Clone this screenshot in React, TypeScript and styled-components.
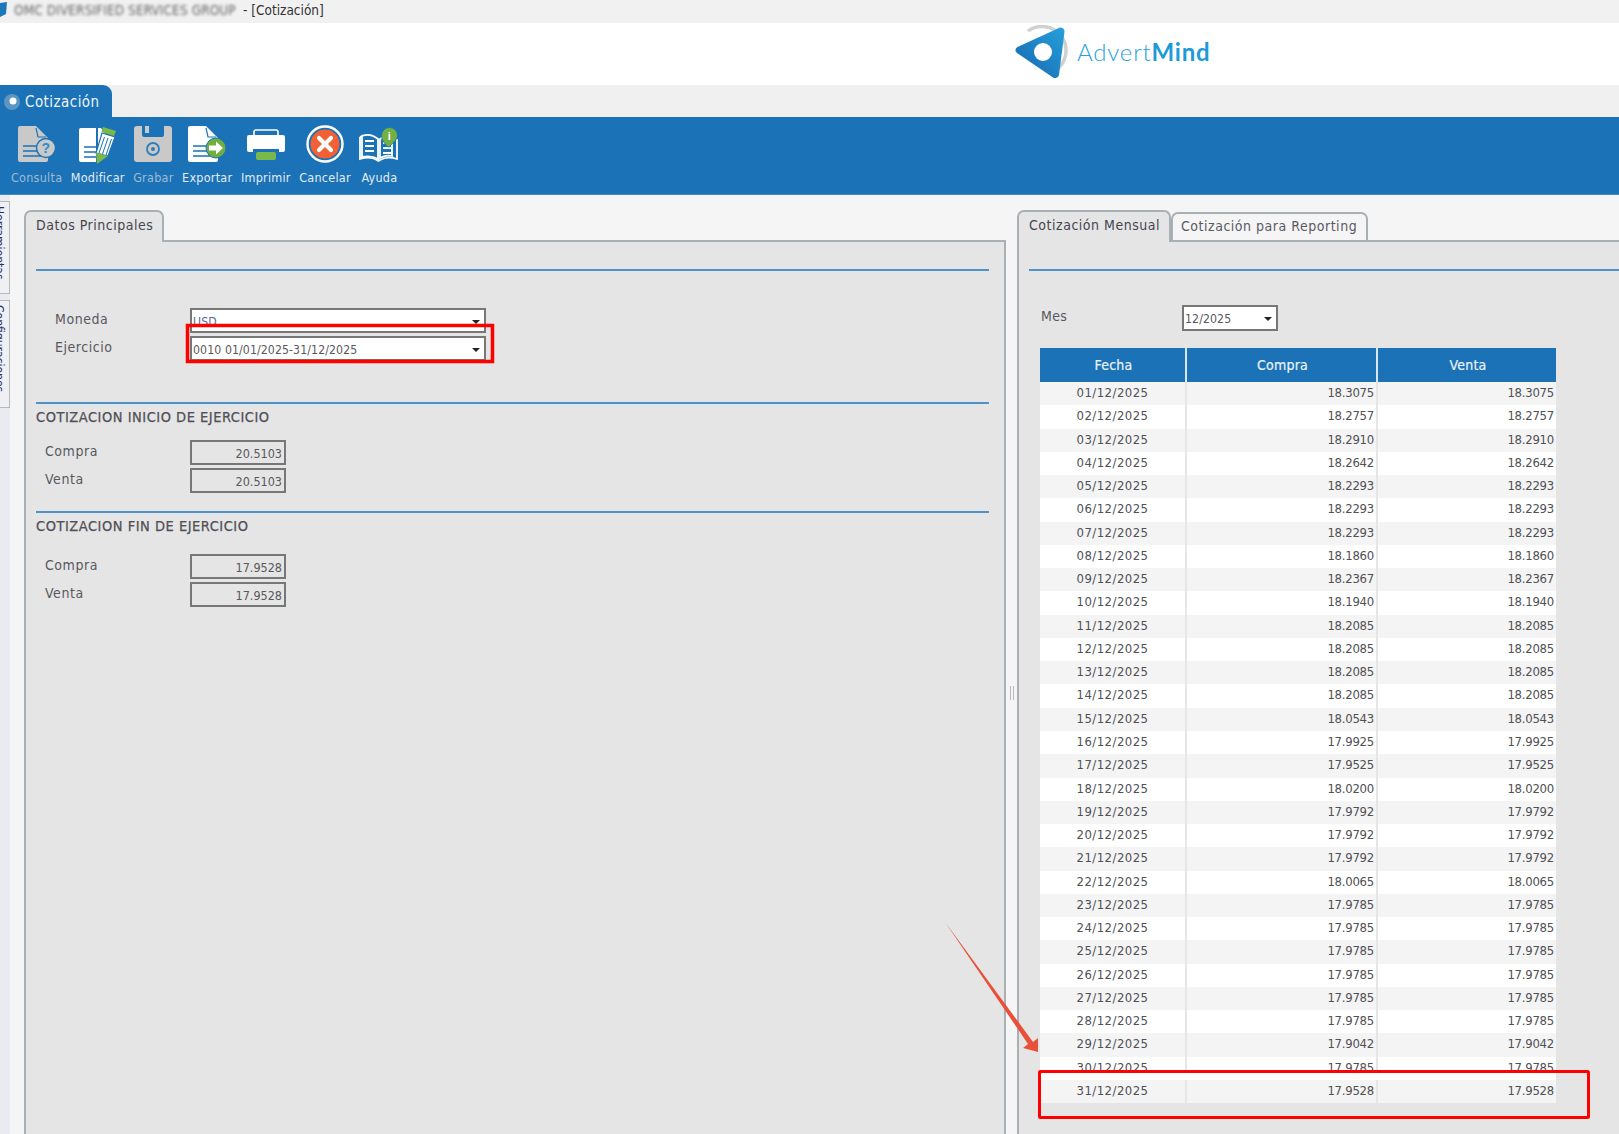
import React from "react";
import styled, { createGlobalStyle } from "styled-components";

const Global = createGlobalStyle`
  html, body { margin: 0; padding: 0; background: #f5f5f5; }
  * { box-sizing: border-box; }
  body { font-family: "DejaVu Sans Condensed", "DejaVu Sans", sans-serif; }
`;

const Page = styled.div`
  position: relative; width: 1619px; height: 1134px; overflow: hidden;
  display: flex; flex-direction: column; background: #f5f5f5;
`;
const TitleBar = styled.div`
  height: 23px; background: #f1f1f1; display: flex; align-items: center; gap: 4px; padding-bottom: 4px;
  font-size: 13.5px; color: #333; overflow: hidden; flex: none;
`;
const TitleMark = styled.svg`width: 8px; height: 18px; flex: none;`;
const BlurredName = styled.span`
  margin-left: 2px; width: 225px; white-space: nowrap; color: #666; filter: blur(1.4px); letter-spacing: .1px;
`;
const LogoBand = styled.div`
  height: 62px; background: #fff; display: flex; align-items: center; padding-left: 1012px; gap: 9px; flex: none;
`;
const LogoMark = styled.svg`width: 56px; height: 58px; flex: none;`;
const LogoText = styled.span`
  font-family: Lato, "Open Sans", sans-serif; font-size: 24px; font-weight: 300; color: #2ba2dc; letter-spacing: .8px; padding-bottom: 5px;
`;
const LogoBold = styled.b`font-weight: 700; color: #1e9bd7;`;
const TabStrip = styled.div`height: 32px; background: #f0f0f0; display: flex; flex: none;`;
const WindowTab = styled.div`
  width: 112px; background: #1b72b6; border-radius: 0 9px 0 0; display: flex; align-items: center; gap: 4px; padding-left: 3px; padding-top: 2px;
  font-size: 15px; color: #eef5fa; letter-spacing: .45px;
`;
const WindowMark = styled.svg`width: 18px; height: 18px; flex: none;`;
const Toolbar = styled.div`
  height: 78px; background: #1b72b6; display: flex; gap: 8.5px; padding: 8px 0 0 11px; flex: none; border-bottom: 1px solid #3c8ac6;
`;
const ToolButton = styled.div<{ $off?: boolean }>`
  display: flex; flex-direction: column; align-items: center; gap: 4px;
  font-size: 12.5px; line-height: 17px; color: ${p => (p.$off ? "#9dbcd3" : "#e2edf5")};
  white-space: nowrap; letter-spacing: .25px;
`;
const ToolIcon = styled.svg`width: 40px; height: 40px; flex: none;`;

const Body = styled.div`flex: 1; display: flex; min-height: 0;`;
const SideStrip = styled.div`
  width: 10px; flex: none; background: #eaebf0; display: flex; flex-direction: column; gap: 6px; padding-top: 6px; margin-right: 14px;
`;
const SideTab = styled.div<{ $h: number }>`
  width: 10px; height: ${p => p.$h}px; background: #eef0f4; border: 1px solid #b9b9bd; border-left: 0;
  writing-mode: vertical-rl; font-size: 12px; line-height: 14px; padding: 4px 3px 0 0; overflow: hidden; color: #2b2f66; white-space: nowrap;
`;
const Pane = styled.div<{ $w: number }>`
  width: ${p => p.$w}px; flex: none; padding-top: 15px; display: flex; flex-direction: column;
`;
const Tabs = styled.div`display: flex; align-items: flex-end; height: 32px; flex: none; margin-bottom: -2px; position: relative; z-index: 1;`;
const Tab = styled.div<{ $on?: boolean; $w: number }>`
  width: ${p => p.$w}px; height: ${p => (p.$on ? 32 : 30)}px; border: 2px solid #a9b0b4; border-bottom: ${p => (p.$on ? "0" : "2px solid #a9b0b4")};
  border-radius: 7px 7px 0 0; background: ${p => (p.$on ? "#e5e5e5" : "#f5f5f5")}; font-size: 14px; line-height: ${p => (p.$on ? 18 : 17)}px; padding: 4px 0 0 ${p => (p.$on ? 10 : 8)}px;
  color: ${p => (p.$on ? "#45454f" : "#5a5a63")}; white-space: nowrap; letter-spacing: .52px;
`;
const Panel = styled.div<{ $open?: boolean }>`
  flex: 1; background: #e5e5e5; border: 2px solid #a9b0b4; border-bottom: 0; ${p => (p.$open ? "border-right: 0;" : "")} padding: 27px 0 0 10px; min-height: 0;
`;
const Rule = styled.div<{ $right?: number }>`
  height: 2px; background: #4d93c9; margin-right: ${p => p.$right ?? 15}px;
`;
const Heading = styled.div<{ $top: number; $bottom: number }>`
  font-size: 14.5px; line-height: 18px; color: #505056; letter-spacing: .52px; margin: ${p => p.$top}px 0 ${p => p.$bottom}px; -webkit-text-stroke: .25px #505056;
`;
const Field = styled.div<{ $indent: number }>`
  display: grid; grid-template-columns: ${p => 154 - p.$indent}px auto; margin-left: ${p => p.$indent}px; align-items: center; justify-content: start; margin-bottom: 3px;
  font-size: 14px; color: #58585e; letter-spacing: .55px;
`;
const Label = styled.span`padding-bottom: 3px;`;
const SelectBox = styled.div<{ $w: number; $h?: number }>`
  position: relative; width: ${p => p.$w}px; height: ${p => p.$h ?? 25}px; background: #fff; border: 2px solid #777; font-size: 12.2px; letter-spacing: .1px; line-height: 25px; padding-left: 1px; color: #5c5c62; overflow: hidden;
  &::after { content: ""; position: absolute; right: 4px; top: 10px; border: 4px solid transparent; border-top: 4px solid #222; border-bottom: 0; }
`;
const SelectValue = styled.span<{ $tint?: boolean }>`color: ${p => (p.$tint ? "#5c6c9a" : "#58585e")};`;
const ReadOnly = styled.div`
  width: 96px; height: 25px; border: 2px solid #777; background: #e5e5e5; text-align: right; font-size: 12.5px; letter-spacing: 0; line-height: 23px; padding-right: 2px; color: #58585e;
`;
const FormBlock = styled.div<{ $top: number; $bottom: number }>`padding-top: ${p => p.$top}px; padding-bottom: ${p => p.$bottom}px;`;
const Splitter = styled.div`width: 11px; flex: none; display: flex; align-items: center; justify-content: center;`;
const Grip = styled.div`width: 4px; height: 14px; border-left: 1px solid #b8b8b8; border-right: 1px solid #b8b8b8; margin-top: 56px;`;

const MesRow = styled.div`
  display: flex; align-items: center; margin: 34px 0 17px 12px; font-size: 14px; color: #58585e; letter-spacing: .3px;
`;
const MesLabel = styled.span`width: 141px; padding-bottom: 4px;`;
const Table = styled.div`margin-left: 11px; width: 516px; font-size: 13px; color: #505055;`;
const HeadRow = styled.div`
  display: grid; grid-template-columns: 145px 191px 180px; height: 34px; background: #1b72b6; color: #e9f2f8;
  font-size: 14px; line-height: 34px; text-align: center; letter-spacing: .2px; -webkit-text-stroke: .2px #e9f2f8;
`;
const HeadCell = styled.div`padding-left: 2px; & + & { border-left: 2px solid #dce6ee; }`;
const Row = styled.div<{ $alt: boolean }>`
  display: grid; grid-template-columns: 145px 191px 180px; height: 23.27px; background: ${p => (p.$alt ? "#f4f4f4" : "#fff")};
`;
const Cell = styled.div<{ $date?: boolean; $cut?: boolean }>`
  line-height: 21px; height: ${p => (p.$cut ? "13px" : "auto")}; overflow: hidden; text-align: ${p => (p.$date ? "center" : "right")}; padding: 0 2px 0 ${p => (p.$date ? 2 : 0)}px;
  letter-spacing: ${p => (p.$date ? ".45px" : "-.25px")};
  & + & { box-shadow: inset 2px 0 0 #e6e6e6; }
`;
const Overlay = styled.svg`position: absolute; left: 0; top: 0; width: 1619px; height: 1134px; pointer-events: none;`;

const rows = [
  ["01/12/2025","18.3075"],["02/12/2025","18.2757"],["03/12/2025","18.2910"],["04/12/2025","18.2642"],
  ["05/12/2025","18.2293"],["06/12/2025","18.2293"],["07/12/2025","18.2293"],["08/12/2025","18.1860"],
  ["09/12/2025","18.2367"],["10/12/2025","18.1940"],["11/12/2025","18.2085"],["12/12/2025","18.2085"],
  ["13/12/2025","18.2085"],["14/12/2025","18.2085"],["15/12/2025","18.0543"],["16/12/2025","17.9925"],
  ["17/12/2025","17.9525"],["18/12/2025","18.0200"],["19/12/2025","17.9792"],["20/12/2025","17.9792"],
  ["21/12/2025","17.9792"],["22/12/2025","18.0065"],["23/12/2025","17.9785"],["24/12/2025","17.9785"],
  ["25/12/2025","17.9785"],["26/12/2025","17.9785"],["27/12/2025","17.9785"],["28/12/2025","17.9785"],
  ["29/12/2025","17.9042"],["30/12/2025","17.9785"],["31/12/2025","17.9528"],
];

const docPath = "M3 1H19L31 13V35a2 2 0 0 1-2 2H3a2 2 0 0 1-2-2V3a2 2 0 0 1 2-2Z";
const Lines = ({ c }: { c: string }) => (
  <g stroke={c} strokeWidth="1.6">
    <path d="M6 21H20M6 26H20M6 31H24" />
  </g>
);

const IconConsulta = () => (
  <ToolIcon viewBox="0 0 40 40">
    <path d={docPath} fill="#c9c9c9" />
    <path d="M19 3L21 12H29" fill="none" stroke="#1b72b6" strokeWidth="1.2" />
    <Lines c="#1b72b6" />
    <circle cx="29" cy="23" r="9.5" fill="#c9c9c9" stroke="#1b72b6" strokeWidth="1.4" />
    <text x="29" y="28" textAnchor="middle" fontSize="14" fontWeight="700" fontFamily="Liberation Sans, sans-serif" fill="#2a8fd0">?</text>
  </ToolIcon>
);
const IconModificar = () => (
  <ToolIcon viewBox="0 0 40 40">
    <path d="M3 3H18V37H3a2 2 0 0 1-2-2V5a2 2 0 0 1 2-2Z" fill="#fff" />
    <path d="M20 3H23L28 10L20 30Z" fill="#fff" />
    <g stroke="#1b72b6" strokeWidth="1.6"><path d="M6 22H19M6 27H19M6 32H19" /></g>
    <path d="M24 8L37 12L30 31L18 28Z" fill="#fff" stroke="#1b72b6" strokeWidth="1.2" />
    <path d="M26.500 12L21 28M30 13L24.500 29M33.500 14L28 30" stroke="#1b72b6" strokeWidth="1" />
    <path d="M25 2L38 6L36 11L23.500 7Z" fill="#7ab84a" />
    <path d="M18 27.500L30 31L19 39Z" fill="#7ab84a" />
  </ToolIcon>
);
const IconGrabar = () => (
  <ToolIcon viewBox="0 0 40 40">
    <path d="M4 1H36a3 3 0 0 1 3 3V34a3 3 0 0 1-3 3H4a3 3 0 0 1-3-3V4a3 3 0 0 1 3-3Z" fill="#c9c9c9" />
    <path d="M9 1H31V10a2 2 0 0 1-2 2H11a2 2 0 0 1-2-2Z" fill="#1b72b6" />
    <rect x="12" y="1" width="4" height="7" fill="#c9c9c9" />
    <circle cx="20" cy="24" r="6" fill="none" stroke="#2a7fbc" strokeWidth="1.8" />
    <circle cx="20" cy="24" r="2" fill="#2a7fbc" />
  </ToolIcon>
);
const IconExportar = () => (
  <ToolIcon viewBox="0 0 40 40">
    <path d={docPath} fill="#fff" />
    <path d="M19 3L21 12H29" fill="none" stroke="#1b72b6" strokeWidth="1.2" />
    <Lines c="#1b72b6" />
    <circle cx="29" cy="23" r="10" fill="#6fae3f" stroke="#1b72b6" strokeWidth="1" />
    <path d="M22 20.500H29V16.500L36 23L29 29.500V25.500H22Z" fill="#fff" />
  </ToolIcon>
);
const IconImprimir = () => (
  <ToolIcon viewBox="0 0 40 40">
    <path d="M8 11V7a2 2 0 0 1 2-2H30a2 2 0 0 1 2 2V11" fill="none" stroke="#fff" strokeWidth="1.6" />
    <path d="M3 10H37a2 2 0 0 1 2 2V25a2 2 0 0 1-2 2H33V24H7V27H3a2 2 0 0 1-2-2V12a2 2 0 0 1 2-2Z" fill="#fff" />
    <rect x="10" y="27" width="20" height="8" rx="2" fill="#7ab84a" />
  </ToolIcon>
);
const IconCancelar = () => (
  <ToolIcon viewBox="0 0 40 40">
    <circle cx="20" cy="19" r="17.500" fill="#1b72b6" stroke="#fff" strokeWidth="2.400" />
    <circle cx="20" cy="19" r="14.500" fill="#f26033" />
    <path d="M14 13L26 25M26 13L14 25" stroke="#fff" strokeWidth="4.200" strokeLinecap="round" />
  </ToolIcon>
);
const IconAyuda = () => (
  <ToolIcon viewBox="0 0 40 40">
    <path d="M1 12L3 11V32C8 31 14 31 19 34V14C14 10 8 9 3 11" fill="none" stroke="#fff" strokeWidth="1.8" />
    <path d="M38 14V34C32 32 26 32 21 35C20 36 19 36 18 35C13 32 7 32 1 34V12" fill="none" stroke="#fff" strokeWidth="1.8" />
    <path d="M21 14C25 11 29 10 33 11V31C29 30 25 31 21 33Z" fill="none" stroke="#fff" strokeWidth="1.8" />
    <path d="M6 16H15M6 21H15M6 26H15M24 18H30M24 23H34M24 28H34" stroke="#fff" strokeWidth="1.8" />
    <path d="M29 22C25 18 22.500 15 22.500 10.500a8 8 0 0 1 16 0C38.500 15 33 18 30.500 22Z" fill="#72b043" stroke="#1b72b6" strokeWidth=".8" />
    <text x="30.500" y="15" textAnchor="middle" fontSize="11" fontWeight="700" fontFamily="Liberation Sans, sans-serif" fill="#fff">i</text>
  </ToolIcon>
);

const tools: [string, React.FC, boolean][] = [
  ["Consulta", IconConsulta, true], ["Modificar", IconModificar, false], ["Grabar", IconGrabar, true],
  ["Exportar", IconExportar, false], ["Imprimir", IconImprimir, false], ["Cancelar", IconCancelar, false], ["Ayuda", IconAyuda, false],
];

export default function App() {
  return (
    <Page>
      <Global />
      <TitleBar>
        <TitleMark viewBox="0 0 8 18"><path d="M0 2L7 1L6 13L0 16Z" fill="#1b78bb" /></TitleMark>
        <BlurredName>OMC DIVERSIFIED SERVICES GROUP</BlurredName>
        <span>- [Cotización]</span>
      </TitleBar>
      <LogoBand>
        <LogoMark viewBox="0 0 56 58">
          <path d="M16 6A24 24 0 0 1 44 45" fill="none" stroke="#d0d0d0" strokeWidth="3.500" />
          <defs>
            <linearGradient id="lg" x1="1" y1="0" x2="0" y2="1"><stop offset="0" stopColor="#26a0dc" /><stop offset="1" stopColor="#1766ae" /></linearGradient>
          </defs>
          <path d="M48 2.500a4 4 0 0 1 4.500 4L47 50a4 4 0 0 1-6 2.500L5 28a3.500 3.500 0 0 1 .5-6Z" fill="url(#lg)" />
          <circle cx="31" cy="27" r="9" fill="#fff" />
        </LogoMark>
        <LogoText>Advert<LogoBold>Mind</LogoBold></LogoText>
      </LogoBand>
      <TabStrip>
        <WindowTab>
          <WindowMark viewBox="0 0 18 18">
            <circle cx="9" cy="9" r="8" fill="#5b95c2" /><circle cx="10" cy="8" r="3.500" fill="#fff" />
          </WindowMark>
          Cotización
        </WindowTab>
      </TabStrip>
      <Toolbar>
        {tools.map(([name, Icon, off]) => (
          <ToolButton key={name} $off={off}><Icon />{name}</ToolButton>
        ))}
      </Toolbar>
      <Body>
        <SideStrip>
          <SideTab $h={93}>Herramientas</SideTab>
          <SideTab $h={108}>Configuraciones</SideTab>
        </SideStrip>
        <Pane $w={982}>
          <Tabs><Tab $on $w={140}>Datos Principales</Tab></Tabs>
          <Panel>
            <Rule />
            <FormBlock $top={37} $bottom={38}>
              <Field $indent={19}><Label>Moneda</Label><SelectBox $w={296}><SelectValue $tint>USD</SelectValue></SelectBox></Field>
              <Field $indent={19}><Label>Ejercicio</Label><SelectBox $w={296}><SelectValue>0010 01/01/2025-31/12/2025</SelectValue></SelectBox></Field>
            </FormBlock>
            <Rule />
            <Heading $top={4} $bottom={14}>COTIZACION INICIO DE EJERCICIO</Heading>
            <FormBlock $top={0} $bottom={15}>
              <Field $indent={9}><Label>Compra</Label><ReadOnly>20.5103</ReadOnly></Field>
              <Field $indent={9}><Label>Venta</Label><ReadOnly>20.5103</ReadOnly></Field>
            </FormBlock>
            <Rule />
            <Heading $top={4} $bottom={14}>COTIZACION FIN DE EJERCICIO</Heading>
            <FormBlock $top={5} $bottom={0}>
              <Field $indent={9}><Label>Compra</Label><ReadOnly>17.9528</ReadOnly></Field>
              <Field $indent={9}><Label>Venta</Label><ReadOnly>17.9528</ReadOnly></Field>
            </FormBlock>
          </Panel>
        </Pane>
        <Splitter><Grip /></Splitter>
        <Pane $w={612}>
          <Tabs>
            <Tab $on $w={154}>Cotización Mensual</Tab>
            <Tab $w={197}>Cotización para Reporting</Tab>
          </Tabs>
          <Panel $open>
            <Rule $right={0} />
            <MesRow>
              <MesLabel>Mes</MesLabel>
              <SelectBox $w={96} $h={26}><SelectValue>12/2025</SelectValue></SelectBox>
            </MesRow>
            <Table>
              <HeadRow><HeadCell>Fecha</HeadCell><HeadCell>Compra</HeadCell><HeadCell>Venta</HeadCell></HeadRow>
              {rows.map(([d, v], i) => (
                <Row key={d} $alt={i % 2 === 0}>
                  <Cell $date $cut={i === 29}>{d}</Cell>
                  <Cell $cut={i === 29}>{v}</Cell>
                  <Cell $cut={i === 29}>{v}</Cell>
                </Row>
              ))}
            </Table>
          </Panel>
        </Pane>
      </Body>
      <Overlay viewBox="0 0 1619 1134">
        <rect x="187.500" y="325.500" width="305" height="36" fill="none" stroke="#f00" strokeWidth="3.500" />
        <rect x="1039.500" y="1071.500" width="549" height="46" rx="1" fill="none" stroke="#f00" strokeWidth="3" />
        <path d="M945 922L1033 1042L1038 1038L1038 1052L1023 1048L1028 1044Z" fill="#e8503a" />
      </Overlay>
    </Page>
  );
}
